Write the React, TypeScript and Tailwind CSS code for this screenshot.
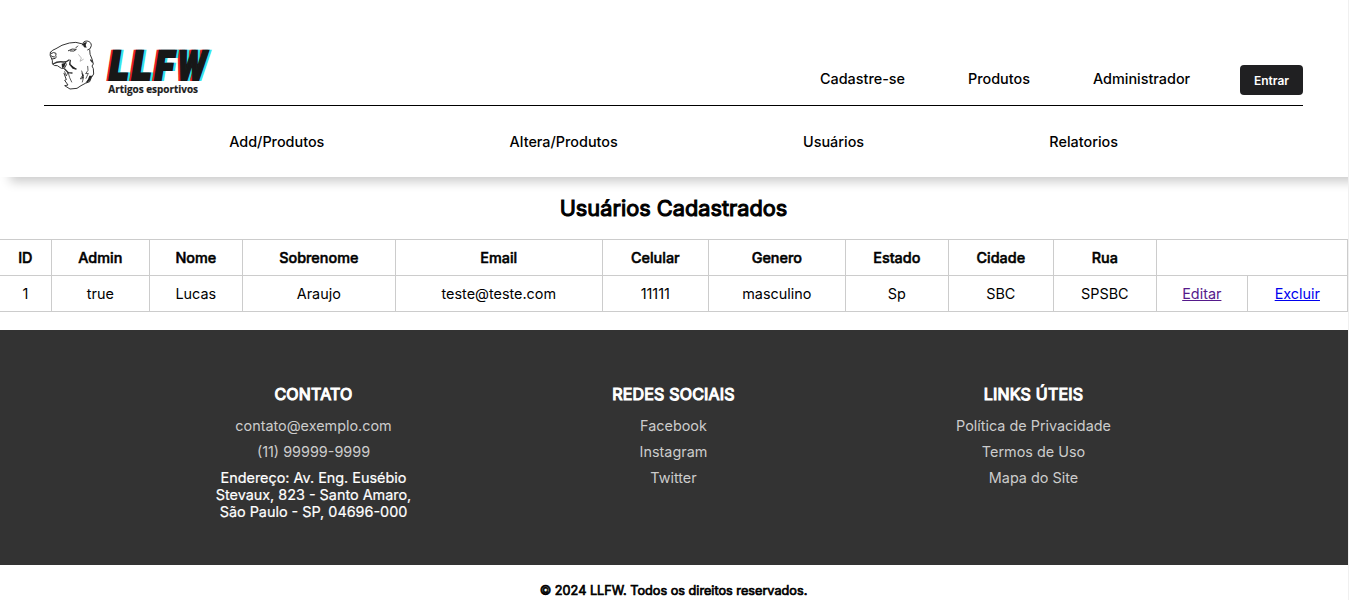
import React from 'react';

const columns = [
  { label: 'ID', value: '1', width: 'w-[52px]' },
  { label: 'Admin', value: 'true', width: 'w-[98px]' },
  { label: 'Nome', value: 'Lucas', width: 'w-[93px]' },
  { label: 'Sobrenome', value: 'Araujo', width: 'w-[153px]' },
  { label: 'Email', value: 'teste@teste.com', width: 'w-[207px]' },
  { label: 'Celular', value: '11111', width: 'w-[106px]' },
  { label: 'Genero', value: 'masculino', width: 'w-[137px]' },
  { label: 'Estado', value: 'Sp', width: 'w-[103px]' },
  { label: 'Cidade', value: 'SBC', width: 'w-[105px]' },
  { label: 'Rua', value: 'SPSBC', width: 'w-[103px]' },
];

const cell = 'h-9 border-r border-b border-[#ccc] p-0 pr-[0.4px] text-center align-middle';

const letters = [
  { char: 'L', x: 202, width: 60 },
  { char: 'L', x: 270, width: 60 },
  { char: 'F', x: 339, width: 58 },
  { char: 'W', x: 405, width: 89 },
];

function Wordmark({ fill, dx }: { fill: string; dx: number }) {
  return (
    <g
      fill={fill}
      stroke={fill}
      strokeWidth="6"
      transform={`translate(${dx} 149) skewX(-9)`}
      fontFamily="Inter, sans-serif"
      fontWeight="900"
      fontSize="121"
    >
      {letters.map((l, i) => (
        <text key={i} x={l.x} y="0" textLength={l.width} lengthAdjust="spacingAndGlyphs">
          {l.char}
        </text>
      ))}
    </g>
  );
}

function Logo() {
  return (
    <svg viewBox="0 0 540 225" className="h-[75px] w-[180px] overflow-visible" role="img" aria-label="LLFW">
      <g transform="translate(12 18)" fill="none" stroke="#333" strokeWidth="3" strokeLinecap="round" strokeLinejoin="round">
        <path d="M19 49Q26 41 36 38Q52 26 76 21Q96 16 113 23" />
        <path d="M115 27Q116 15 129 15Q142 17 142 29Q141 40 131 42" />
        <path d="M137 42Q136 55 144 69L148 84L144 90L148 98L149 114L142 125L137 137L124 142L111 149L99 157L78 159L62 149L72 147L62 133L67 131L60 112" />
        <path d="M19 49Q16 58 22 66Q27 74 25 83Q30 91 40 89L52 97L61 97L67 86L64 78" />
        <path d="M22 52Q29 47 36 52Q38 60 31 63Q23 63 20 58M38 63Q35 69 25 69" />
        <path d="M27 84Q42 75 58 78Q66 79 75 72" strokeWidth="4" />
        <path d="M73 44Q84 36 97 40Q92 48 79 45" />
        <path d="M96 35L101 30" />
        <path d="M104 56L112 66L108 76L118 70" stroke="#999" strokeWidth="2" />
        <path d="M79 73L77 85L87 96L96 99M62 99L73 110L84 111M140 72L145 78" strokeWidth="4" />
        <path d="M62 107L67 120L72 108L77 125L83 138M113 105L117 116L109 129L119 123L115 138M131 91L132 103L125 113L133 112L126 127" strokeWidth="2.4" />
      </g>
      <g transform="translate(12 18)" fill="#222">
        <path d="M116 25Q120 17 129 19L125 27L128 35L120 34ZM53 83L65 80L61 94L54 96ZM75 77L83 88L96 98L85 97ZM112 109L120 119L113 132L115 121ZM136 119L145 119L136 136L124 141L132 130Z" />
      </g>
      <Wordmark fill="#ed1c2b" dx={-5} />
      <Wordmark fill="#36e5ea" dx={6} />
      <Wordmark fill="#171717" dx={0} />
      <text x="205" y="188" fill="#1c1c1c" stroke="#1c1c1c" strokeWidth="0.6" fontFamily="'Open Sans', sans-serif" fontWeight="700" fontSize="30" textLength="269" lengthAdjust="spacingAndGlyphs">
        Artigos esportivos
      </text>
    </svg>
  );
}

function FooterColumn({ title, children }: { title: string; children: React.ReactNode }) {
  return (
    <section className="flex w-[200px] flex-col items-center text-center">
      <h3 className="mb-[13px] text-[16px] leading-[19px] font-normal tracking-[0.2px] whitespace-nowrap [-webkit-text-stroke:1.1px_#fff]">
        {title}
      </h3>
      {children}
    </section>
  );
}

function FooterLink({ children }: { children: React.ReactNode }) {
  return (
    <a href="#" className="mb-[9px] text-[14.4px] leading-[17px] whitespace-nowrap text-[#ccc]">
      {children}
    </a>
  );
}

export default function App() {
  return (
    <div className="h-[600px] w-full overflow-hidden border-r border-[#f0f0f0] bg-white font-['Inter',sans-serif] text-black">
      <header className="h-[177px] pr-[45px] pl-11 shadow-[10px_5px_10px_rgba(0,0,0,0.2)]">
        <div className="flex h-[106px] items-start justify-between border-b border-black">
          <div className="-ml-1 pt-[30px]">
            <Logo />
          </div>
          <nav className="flex items-start pt-[65px] text-[14.4px] leading-[28px] font-medium">
            <a href="#" className="mr-[63px] w-[85px] whitespace-nowrap">Cadastre-se</a>
            <a href="#" className="mr-[63px] w-[62px] whitespace-nowrap">Produtos</a>
            <a href="#" className="mr-[50px] w-[97px] whitespace-nowrap">Administrador</a>
            <button className="h-[30px] w-[63px] rounded bg-[#202022] pt-px text-[12px] leading-[30px] font-semibold text-white">
              Entrar
            </button>
          </nav>
        </div>
        <nav className="flex justify-between pt-[27px] pr-[185px] pl-[185.2px] text-[14.4px] leading-[18px] font-medium">
          <a href="#">Add/Produtos</a>
          <a href="#">Altera/Produtos</a>
          <a href="#">Usuários</a>
          <a href="#">Relatorios</a>
        </nav>
      </header>

      <main className="h-[153px] pt-[18px]">
        <h2 className="h-[44px] pr-px text-center text-[21.75px] leading-[27px] font-normal [-webkit-text-stroke:1.1px_#000]">
          Usuários Cadastrados
        </h2>
        <table className="w-[1348px] table-fixed border-separate border-spacing-0 border-t border-[#ccc] text-[14.4px]">
          <colgroup>
            {columns.map((c) => (
              <col key={c.label} className={c.width} />
            ))}
            <col className="w-[91px]" />
            <col className="w-[100px]" />
          </colgroup>
          <thead>
            <tr>
              {columns.map((c) => (
                <th key={c.label} className={`${cell} font-medium [-webkit-text-stroke:0.5px_#000]`}>
                  {c.label}
                </th>
              ))}
              <th colSpan={2} className={cell} />
            </tr>
          </thead>
          <tbody>
            <tr>
              {columns.map((c) => (
                <td key={c.label} className={cell}>
                  {c.value}
                </td>
              ))}
              <td className={cell}>
                <a href="#" className="text-[#551a8b] underline">Editar</a>
              </td>
              <td className={cell}>
                <a href="#" className="text-[#0000ee] underline">Excluir</a>
              </td>
            </tr>
          </tbody>
        </table>
      </main>

      <footer>
        <div className="flex h-[235px] justify-center gap-[160px] bg-[#333] pt-[55px] pr-px text-white">
          <FooterColumn title="CONTATO">
            <FooterLink>contato@exemplo.com</FooterLink>
            <FooterLink>(11) 99999-9999</FooterLink>
            <p className="text-[14.4px] leading-[17px] font-normal whitespace-nowrap [-webkit-text-stroke:0.2px_#fff]">
              Endereço: Av. Eng. Eusébio
              <br />
              Stevaux, 823 - Santo Amaro,
              <br />
              São Paulo - SP, 04696-000
            </p>
          </FooterColumn>
          <FooterColumn title="REDES SOCIAIS">
            <FooterLink>Facebook</FooterLink>
            <FooterLink>Instagram</FooterLink>
            <FooterLink>Twitter</FooterLink>
          </FooterColumn>
          <FooterColumn title="LINKS ÚTEIS">
            <FooterLink>Política de Privacidade</FooterLink>
            <FooterLink>Termos de Uso</FooterLink>
            <FooterLink>Mapa do Site</FooterLink>
          </FooterColumn>
        </div>
        <p className="pt-[18px] pr-px text-center text-[12.7px] leading-[15px] font-normal [-webkit-text-stroke:0.7px_#000]">
          © 2024 LLFW. Todos os direitos reservados.
        </p>
      </footer>
    </div>
  );
}
